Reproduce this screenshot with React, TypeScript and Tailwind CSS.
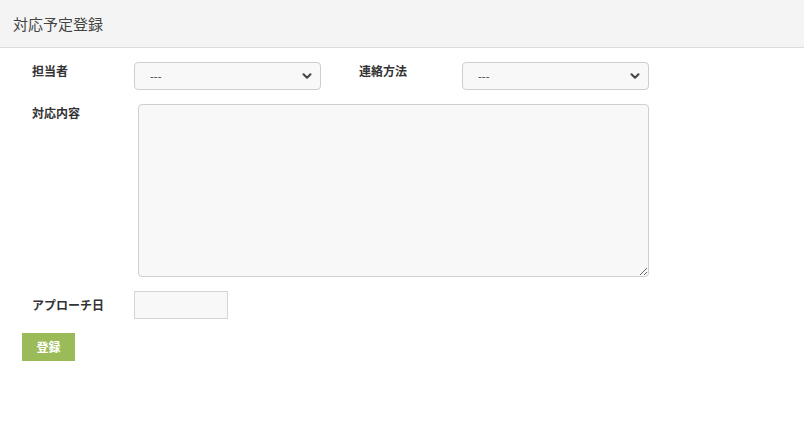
import { ChevronDown } from "lucide-react";

function Select({ className = "" }: { className?: string }) {
  return (
    <div
      className={
        "flex h-[28px] w-[187px] items-center justify-between rounded-[4px] border border-[#cfcfcf] bg-[#f8f8f8] pl-[15px] pr-[6px] text-[11px] text-[#333] " +
        className
      }
    >
      <span>---</span>
      <ChevronDown className="h-[14px] w-[14px] text-[#444]" strokeWidth={3.5} />
    </div>
  );
}

export default function App() {
  return (
    <div className="min-h-[436px] bg-white font-['Noto_Sans_CJK_JP','Noto_Sans',sans-serif] text-[#333]">
      <div className="flex h-[48px] items-center border-b border-[#dcdcdc] bg-[#f4f4f4] pl-[13px]">
        <h1 className="text-[15px] font-normal leading-none text-[#444]">対応予定登録</h1>
      </div>

      <div className="pl-[32px] pt-[14px]">
        {/* 担当者 / 連絡方法 */}
        <div className="flex items-start">
          <label className="w-[102px] pt-[1px] text-[12px] font-bold leading-[16px]">担当者</label>
          <Select />
          <label className="ml-[38px] w-[103px] pt-[1px] text-[12px] font-bold leading-[16px]">連絡方法</label>
          <Select />
        </div>

        {/* 対応内容 */}
        <div className="mt-[14px] flex items-start">
          <label className="w-[106px] pt-[1px] text-[12px] font-bold leading-[16px]">対応内容</label>
          <textarea className="h-[173px] w-[511px] resize-y rounded-[4px] border border-[#cfcfcf] bg-[#f8f8f8] outline-none" />
        </div>

        {/* アプローチ日 */}
        <div className="mt-[14px] flex items-start">
          <label className="w-[102px] pt-[6px] text-[12px] font-bold leading-[16px]">アプローチ日</label>
          <input className="h-[28px] w-[94px] border border-[#d5d5d5] bg-[#f8f8f8] outline-none" />
        </div>
      </div>

      <div className="pl-[22px] pt-[14px]">
        <button className="h-[28px] w-[53px] bg-[#9bbb59] text-[12px] font-bold text-white">登録</button>
      </div>
    </div>
  );
}
